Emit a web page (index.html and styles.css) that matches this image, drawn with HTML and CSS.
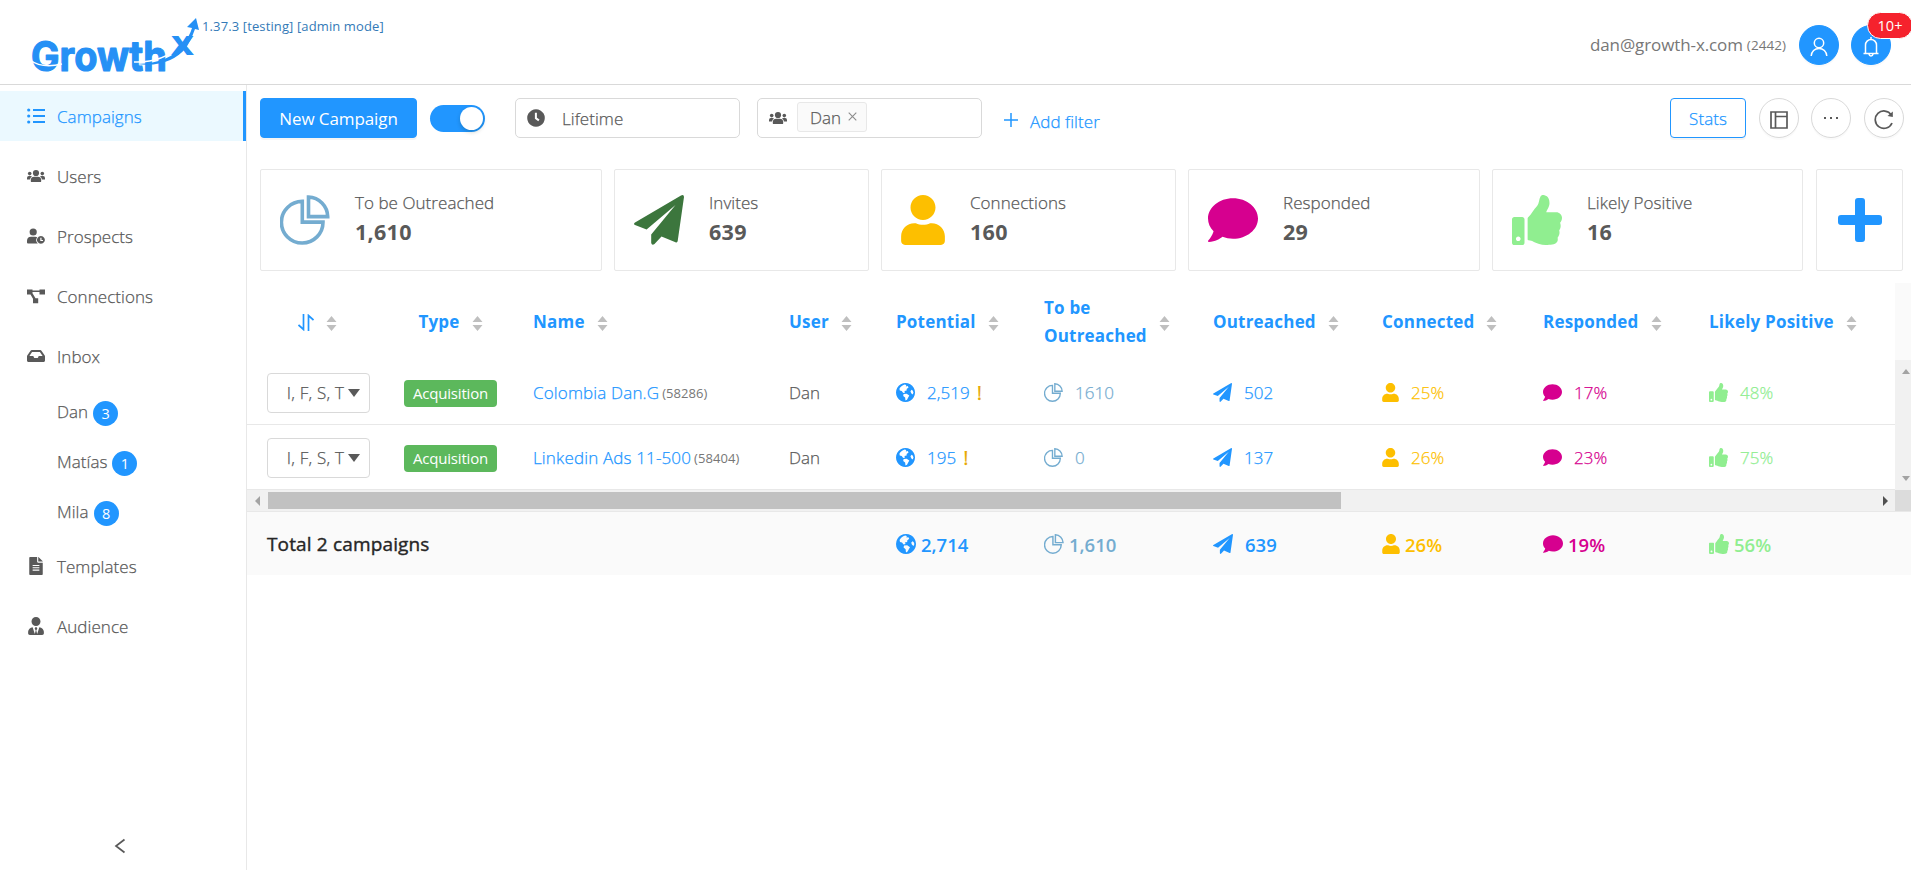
FILE: index.html
```html
<!DOCTYPE html>
<html lang="en">
<head>
  <meta charset="UTF-8">
  <title>GrowthX - Campaigns</title>
  <link rel="stylesheet" href="styles.css">
</head>
<body>

  <!-- icon sprite -->
  <svg class="sprite">
    <symbol id="i-list" viewBox="0 0 18 18">
      <circle cx="1.7" cy="3" r="1.6"/><circle cx="1.7" cy="9" r="1.6"/><circle cx="1.7" cy="15" r="1.6"/>
      <path d="M6 2h12v2H6zM6 8h12v2H6zM6 14h12v2H6z"/>
    </symbol>
    <symbol id="i-users" viewBox="0 0 18 18">
      <circle cx="9" cy="6" r="3.1"/><circle cx="2.7" cy="6.6" r="1.8"/><circle cx="15.3" cy="6.6" r="1.8"/>
      <path d="M3.8 14.2v-1.4a3.4 3.4 0 0 1 3.4-3.1h3.6a3.4 3.4 0 0 1 3.4 3.1v1.4q0 .9-.9.9H4.7q-.9 0-.9-.9zM0 12.4v-1.5A1.8 1.8 0 0 1 1.8 9.100h1.900q.8 0 1.300.5-1.700.9-2 2.800zM18 12.400v-1.500a1.800 1.800 0 0 0-1.800-1.800h-1.900q-.8 0-1.300.5 1.700.9 2 2.800z"/>
    </symbol>
    <symbol id="i-prospects" viewBox="0 0 18 18">
      <circle cx="6.200" cy="5" r="3.600"/>
      <path d="M0 15.500v-1.800a4.200 4.200 0 0 1 4-4h4.200q1.200 0 2 .5a4.800 4.800 0 0 0 .6 6.300H1q-1 0-1-1z"/>
      <path fill-rule="evenodd" d="M13.900 9a3.900 3.900 0 1 0 .01 0zM13.300 10.800h1.200v2.100h1.500v1.100h-2.700z"/>
    </symbol>
    <symbol id="i-connections" viewBox="0 0 18 18">
      <path d="M0 2.400h5.500v1.200h7V2.400H18v5h-5.500V5.100h-7v1.100l3 5h2.700v5H6v-4.400L3.500 7.400H0z"/>
    </symbol>
    <symbol id="i-inbox" viewBox="0 0 576 512">
      <path d="M567.938 243.908L462.25 85.374A48.003 48.003 0 0 0 422.311 64H153.689a48 48 0 0 0-39.938 21.374L8.062 243.908A47.994 47.994 0 0 0 0 270.533V400c0 26.51 21.49 48 48 48h480c26.51 0 48-21.49 48-48V270.533a47.994 47.994 0 0 0-8.062-26.625zM162.252 128h251.497l85.333 128H376l-32 64H232l-32-64H76.918l85.334-128z"/>
    </symbol>
    <symbol id="i-file" viewBox="0 0 384 512">
      <path fill-rule="evenodd" d="M224 136V0H24C10.700 0 0 10.700 0 24v464c0 13.300 10.700 24 24 24h336c13.300 0 24-10.700 24-24V160H248c-13.200 0-24-10.800-24-24zM96 224h192v32H96zM96 290h192v32H96zM96 356h192v32H96zM384 122v6H256V0h6l122 122z"/>
    </symbol>
    <symbol id="i-tie" viewBox="0 0 448 512">
      <path d="M224 256c70.700 0 128-57.300 128-128S294.700 0 224 0 96 57.300 96 128s57.300 128 128 128zM319 289l-61 191-26-95 30-60-18-37h-40l-18 37 30 60-26 95-61-191C60 292 0 350 0 422v42c0 26 21 48 48 48h352c27 0 48-22 48-48v-42c0-72-60-130-129-133z"/>
    </symbol>
    <symbol id="i-clock" viewBox="0 0 18 18">
      <path fill-rule="evenodd" d="M9 .2a8.800 8.800 0 1 0 .01 0zM7.900 3.800h2v4.900l2.600 1.900-1.200 1.600-3.400-2.500z"/>
    </symbol>
    <symbol id="i-globe" viewBox="0 0 50 50">
      <path fill-rule="evenodd" d="M25 0a25 25 0 1 0 .01 0zM23 4l4 1-1 4 5-1 2 4-5 4 0 4-6 1 2 4-5 1-4-5-5-1-1-5C12 10 16 6 23 4zM20 29l8-1 7 5-3 5-3 6-4 2-1-8-5-4zM41 18l3 2 2 5-2 5-4-3-2-5z"/>
    </symbol>
    <symbol id="i-plane" viewBox="0 0 50 50">
      <path d="M1 27.500L47 .400Q50-.700 50 2L43.700 46Q43.300 48 41.500 47.200L27.500 41.500 20.500 49Q18 51 17.200 48V39.500L41.500 10 12.600 34.500 1 30Q-1 29 1 27.500z"/>
    </symbol>
    <symbol id="i-pie" viewBox="0 0 50 50">
      <path class="line" d="M22.300 6.400a20.800 20.800 0 1 0 20.700 20.700H22.300zM28.500 2v19.600H47.700A20 20 0 0 0 28.500 2z"/>
    </symbol>
    <symbol id="i-user" viewBox="0 0 448 512">
      <path d="M224 256c70.700 0 128-57.300 128-128S294.700 0 224 0 96 57.300 96 128s57.300 128 128 128zm89.600 32h-16.700c-22.200 10.200-46.900 16-72.900 16s-50.600-5.800-72.900-16h-16.700C60.200 288 0 348.200 0 422.400V472c0 22 18 40 40 40h368c22 0 40-18 40-40v-49.600c0-74.200-60.200-134.400-134.400-134.400z"/>
    </symbol>
    <symbol id="i-comment" viewBox="0 0 512 512">
      <path d="M256 32C114.600 32 0 125.100 0 240c0 49.600 21.400 95 57 130.700C44.500 421.100 2.700 466 2.200 466.500c-2.200 2.300-2.800 5.700-1.500 8.700S4.800 480 8 480c66.300 0 116-31.800 140.600-51.400 32.700 12.300 69 19.400 107.400 19.400 141.400 0 256-93.100 256-208S397.400 32 256 32z"/>
    </symbol>
    <symbol id="i-thumb" viewBox="0 0 512 512">
      <path d="M104 224H24c-13.255 0-24 10.745-24 24v240c0 13.255 10.745 24 24 24h80c13.255 0 24-10.745 24-24V248c0-13.255-10.745-24-24-24zM64 472c-13.255 0-24-10.745-24-24s10.745-24 24-24 24 10.745 24 24-10.745 24-24 24zM384 81.452c0 42.416-25.970 66.208-33.277 94.548h101.723c33.397 0 59.397 27.746 59.553 58.098.084 17.938-7.546 37.249-19.439 49.197l-.11.11c9.836 23.337 8.237 56.037-9.308 79.469 8.681 25.895-.069 57.704-16.382 74.757 4.298 17.598 2.244 32.575-6.148 44.632C440.202 511.587 389.616 512 346.839 512l-2.845-.001c-48.287-.017-87.806-17.598-119.560-31.725-15.957-7.099-36.821-15.887-52.651-16.178-6.540-.12-11.783-5.457-11.783-11.998v-213.770c0-3.200 1.282-6.271 3.558-8.521 39.614-39.144 56.648-80.587 89.117-113.111 14.804-14.832 20.188-37.236 25.393-58.902C282.515 39.293 291.817 0 312 0c24 0 72 8 72 81.452z"/>
    </symbol>
    <symbol id="i-plus" viewBox="0 0 44 44">
      <path d="M20 0h4q3 0 3 3v14h14q3 0 3 3v4q0 3-3 3H27v14q0 3-3 3h-4q-3 0-3-3V27H3q-3 0-3-3v-4q0-3 3-3h14V3q0-3 3-3z"/>
    </symbol>
    <symbol id="i-sort" viewBox="0 0 10 15">
      <path d="M5 0l5 6H0zM5 15L0 9h10z"/>
    </symbol>
  </svg>

  <header class="header">
    <div class="brand">
      <svg class="logo" viewBox="0 0 180 69" width="180" height="69">
        <text class="logo-word" x="9" y="55.5" textLength="136" lengthAdjust="spacingAndGlyphs">Growth</text>
        <path class="logo-cut" d="M8 45Q20 54 40 49M112 47Q140 48 158 31"/>
        <text class="logo-x" x="149" y="40" textLength="23" lengthAdjust="spacingAndGlyphs">X</text>
        <path class="logo-arrow" d="M115 49Q148 48 161 30Q168 20 170 13L165 12 174 3 177 15 173 14Q170 24 164 33Q147 53 115 49z"/>
      </svg>
      <span class="version">1.37.3 [testing] [admin mode]</span>
    </div>
    <div class="account">
      <span class="email">dan@growth-x.com</span>
      <span class="email-id">(2442)</span>
      <button class="round blue">
        <svg class="stroke" width="18" height="20" viewBox="0 0 18 20"><circle cx="9" cy="6" r="4.700"/><path d="M1.200 19c.3-4.500 3.500-7.600 7.800-7.600s7.500 3.100 7.800 7.600"/></svg>
      </button>
      <button class="round blue bell">
        <svg class="stroke" width="16" height="20" viewBox="0 0 16 20"><path d="M8 0v2M2.500 16.500V8a5.500 5.500 0 0 1 11 0v8.500M.5 16.500h15M6 17.200q.3 1.800 2 1.800t2-1.800"/></svg>
        <span class="count">10+</span>
      </button>
    </div>
  </header>

  <div class="page">
    <nav class="sidebar">
      <a class="item active"><svg class="ico"><use href="#i-list"/></svg><span>Campaigns</span></a>
      <a class="item"><svg class="ico"><use href="#i-users"/></svg><span>Users</span></a>
      <a class="item"><svg class="ico"><use href="#i-prospects"/></svg><span>Prospects</span></a>
      <a class="item"><svg class="ico"><use href="#i-connections"/></svg><span>Connections</span></a>
      <a class="item"><svg class="ico"><use href="#i-inbox"/></svg><span>Inbox</span></a>
      <div class="sub">
        <a class="sub-item"><span>Dan</span><b>3</b></a>
        <a class="sub-item"><span>Matías</span><b>1</b></a>
        <a class="sub-item"><span>Mila</span><b>8</b></a>
      </div>
      <a class="item"><svg class="ico"><use href="#i-file"/></svg><span>Templates</span></a>
      <a class="item"><svg class="ico"><use href="#i-tie"/></svg><span>Audience</span></a>
      <svg class="collapse" width="12" height="16" viewBox="0 0 12 16"><path d="M10.500 1.500L2 8l8.500 6.500"/></svg>
    </nav>

    <main class="main">
      <div class="toolbar">
        <button class="btn primary"><span>New Campaign</span></button>
        <div class="switch"></div>
        <div class="select period"><svg class="ico small"><use href="#i-clock"/></svg><span>Lifetime</span></div>
        <div class="select people"><svg class="ico small"><use href="#i-users"/></svg>
          <div class="tag"><span>Dan</span><svg width="9" height="9" viewBox="0 0 9 9"><path d="M.7.700l7.600 7.600M8.300.700L.7 8.300"/></svg></div>
        </div>
        <a class="add-filter"><svg width="14" height="14" viewBox="0 0 14 14"><path d="M7 0v14M0 7h14"/></svg><span>Add filter</span></a>
        <div class="tools">
          <button class="btn stats"><span>Stats</span></button>
          <button class="round columns"><svg width="18" height="18" viewBox="0 0 18 18"><path d="M1 1h16v16H1zM5.500 1v16M5.500 5.500H17"/></svg></button>
          <button class="round dots"><i></i><i></i><i></i></button>
          <button class="round refresh"><svg width="20" height="20" viewBox="0 0 20 20"><path d="M17.300 5A8.700 8.700 0 1 0 18 13"/><path class="head" d="M18.800 1.500v5.400l-5.300-1z"/></svg></button>
        </div>
      </div>

      <div class="cards">
        <div class="card steel"><svg><use href="#i-pie"/></svg><div><p>To be Outreached</p><strong>1,610</strong></div></div>
        <div class="card forest"><svg><use href="#i-plane"/></svg><div><p>Invites</p><strong>639</strong></div></div>
        <div class="card amber"><svg class="narrow"><use href="#i-user"/></svg><div><p>Connections</p><strong>160</strong></div></div>
        <div class="card pink"><svg><use href="#i-comment"/></svg><div><p>Responded</p><strong>29</strong></div></div>
        <div class="card mint"><svg><use href="#i-thumb"/></svg><div><p>Likely Positive</p><strong>16</strong></div></div>
        <div class="card add"><svg><use href="#i-plus"/></svg></div>
      </div>

      <div class="table">
        <div class="row head">
          <div class="center"><svg class="swap" width="16" height="17" viewBox="0 0 16 17"><path d="M5.500 0v15.500L.5 11M10.500 17V1.500l5 4.500"/></svg><svg class="sort"><use href="#i-sort"/></svg></div>
          <div class="center"><span>Type</span><svg class="sort"><use href="#i-sort"/></svg></div>
          <div><span>Name</span><svg class="sort"><use href="#i-sort"/></svg></div>
          <div><span>User</span><svg class="sort"><use href="#i-sort"/></svg></div>
          <div><span>Potential</span><svg class="sort"><use href="#i-sort"/></svg></div>
          <div><span>To be<br>Outreached</span><svg class="sort"><use href="#i-sort"/></svg></div>
          <div><span>Outreached</span><svg class="sort"><use href="#i-sort"/></svg></div>
          <div><span>Connected</span><svg class="sort"><use href="#i-sort"/></svg></div>
          <div><span>Responded</span><svg class="sort"><use href="#i-sort"/></svg></div>
          <div><span>Likely Positive</span><svg class="sort"><use href="#i-sort"/></svg></div>
          <div class="gutter"></div>
        </div>

        <div class="body">
          <div class="rows">
            <div class="row">
              <div class="center"><button class="picker"><span>I, F, S, T</span><i></i></button></div>
              <div class="center"><span class="label">Acquisition</span></div>
              <div class="name"><a>Colombia Dan.G</a><small>(58286)</small></div>
              <div>Dan</div>
              <div class="blue-text"><svg><use href="#i-globe"/></svg><span>2,519</span><em>!</em></div>
              <div class="steel"><svg><use href="#i-pie"/></svg><span>1610</span></div>
              <div class="blue-text"><svg><use href="#i-plane"/></svg><span>502</span></div>
              <div class="amber"><svg class="narrow"><use href="#i-user"/></svg><span>25%</span></div>
              <div class="pink"><svg><use href="#i-comment"/></svg><span>17%</span></div>
              <div class="mint"><svg><use href="#i-thumb"/></svg><span>48%</span></div>
            </div>
            <div class="row">
              <div class="center"><button class="picker"><span>I, F, S, T</span><i></i></button></div>
              <div class="center"><span class="label">Acquisition</span></div>
              <div class="name"><a>Linkedin Ads 11-500</a><small>(58404)</small></div>
              <div>Dan</div>
              <div class="blue-text"><svg><use href="#i-globe"/></svg><span>195</span><em>!</em></div>
              <div class="steel"><svg><use href="#i-pie"/></svg><span>0</span></div>
              <div class="blue-text"><svg><use href="#i-plane"/></svg><span>137</span></div>
              <div class="amber"><svg class="narrow"><use href="#i-user"/></svg><span>26%</span></div>
              <div class="pink"><svg><use href="#i-comment"/></svg><span>23%</span></div>
              <div class="mint"><svg><use href="#i-thumb"/></svg><span>75%</span></div>
            </div>
          </div>
          <div class="vscroll"><i class="up"></i><i class="down"></i></div>
        </div>

        <div class="hscroll"><i class="left"></i><div class="thumb"></div><i class="right"></i><div class="corner"></div></div>

        <div class="row total">
          <div class="total-label">Total 2 campaigns</div>
          <div class="blue-text"><svg><use href="#i-globe"/></svg><span>2,714</span></div>
          <div class="steel"><svg><use href="#i-pie"/></svg><span>1,610</span></div>
          <div class="blue-text far"><svg><use href="#i-plane"/></svg><span>639</span></div>
          <div class="amber"><svg class="narrow"><use href="#i-user"/></svg><span>26%</span></div>
          <div class="pink"><svg><use href="#i-comment"/></svg><span>19%</span></div>
          <div class="mint"><svg><use href="#i-thumb"/></svg><span>56%</span></div>
        </div>
      </div>
    </main>
  </div>

</body>
</html>
```
FILE: styles.css
```css
* {
  box-sizing: border-box;
}

body {
  margin: 0;
  height: 870px;
  overflow: hidden;
  display: flex;
  flex-direction: column;
  background: #fff;
  color: #595959;
  font-family: "Open Sans", "Noto Sans", sans-serif;
  font-size: 17px;
  font-weight: 300;
  letter-spacing: 0.05px;
  -webkit-text-stroke: 0.25px;
}

.sprite {
  display: none;
}

svg {
  flex: none;
  fill: currentColor;
}

button {
  font: inherit;
  letter-spacing: inherit;
  color: inherit;
  padding: 0;
  cursor: pointer;
}

.line {
  fill: none;
  stroke: currentColor;
  stroke-width: 3.6;
}

/* Header */
.header {
  height: 85px;
  flex: none;
  display: flex;
  justify-content: space-between;
  border-bottom: 1px solid #d9d9d9;
  -webkit-text-stroke: 0;
}

.brand {
  display: flex;
  padding: 15px 0 0 22px;
}

.logo,
.logo-arrow {
  fill: #2590f5;
}

.logo-word {
  font-family: Inter, "Open Sans", sans-serif;
  font-weight: 700;
  font-size: 41px;
  stroke: #2590f5;
  stroke-width: 1.2;
  stroke-linejoin: round;
}

.logo-x {
  font-weight: 800;
  font-size: 27px;
}

.logo-cut {
  fill: none;
  stroke: #fff;
  stroke-width: 1.5;
}

.version {
  margin-top: 2px;
  font-size: 13px;
  font-weight: 400;
  letter-spacing: 0.12px;
  color: #337ab7;
}

.account {
  display: flex;
  align-items: center;
  padding: 5px 20px 0 0;
}

.email {
  color: #777;
  font-weight: 400;
  letter-spacing: -0.1px;
  margin-right: 4px;
}

.email-id {
  color: #777;
  font-weight: 400;
  font-size: 13.5px;
  margin-right: 13px;
}

.round {
  width: 40px;
  height: 40px;
  border: 1px solid #d9d9d9;
  border-radius: 50%;
  background: #fff;
  display: flex;
  align-items: center;
  justify-content: center;
  box-shadow: 0 2px 0 rgba(0, 0, 0, 0.02);
}

.round path {
  fill: none;
  stroke: #595959;
  stroke-width: 1.7;
}

.round.blue {
  background: #2196ff;
  border-color: #2196ff;
  padding-top: 4px;
}

.round .stroke * {
  fill: none;
  stroke: #fff;
  stroke-width: 1.5;
}

.bell {
  position: relative;
  margin-left: 12px;
}

.count {
  position: absolute;
  left: 15px;
  top: -14px;
  width: 46px;
  height: 27px;
  border: 1px solid #fff;
  border-radius: 14px;
  background: #f5222d;
  color: #fff;
  font-size: 14.5px;
  font-weight: 400;
  line-height: 25px;
}

/* Sidebar */
.page {
  flex: 1;
  display: flex;
  min-height: 0;
}

.sidebar {
  width: 247px;
  flex: none;
  display: flex;
  flex-direction: column;
  border-right: 1px solid #e8e8e8;
  padding: 6px 0 16px;
}

.item {
  height: 50px;
  margin-bottom: 10px;
  padding-left: 27px;
  display: flex;
  align-items: center;
}

.ico {
  width: 18px;
  height: 18px;
  margin-right: 12px;
}

.active {
  background: #ebf9ff;
  color: #2196ff;
  border-right: 3px solid #2196ff;
}

.sub {
  margin-top: -4px;
  margin-bottom: 4px;
}

.sub-item {
  height: 50px;
  padding-left: 57px;
  display: flex;
  align-items: center;
}

.sub-item span {
  margin-top: -1px;
}

.sub-item b {
  width: 25px;
  height: 25px;
  margin: 3px 0 0 5px;
  border-radius: 50%;
  background: #2196ff;
  color: #fff;
  font-size: 14.5px;
  font-weight: 400;
  line-height: 25px;
  text-align: center;
  -webkit-text-stroke: 0;
}

.collapse {
  margin: auto auto 0 114px;
}

.collapse path {
  fill: none;
  stroke: #595959;
  stroke-width: 1.7;
}

/* Toolbar */
.main {
  flex: 1;
  min-width: 0;
}

.toolbar {
  display: flex;
  align-items: center;
  padding: 13px 7px 0 13px;
}

.btn {
  height: 40px;
  border: 1px solid #2196ff;
  border-radius: 4px;
  box-shadow: 0 2px 0 rgba(0, 0, 0, 0.04);
}

.primary {
  width: 157px;
  background: #2196ff;
  color: #fff;
  font-weight: 400;
  letter-spacing: -0.1px;
  -webkit-text-stroke: 0;
}

.switch {
  width: 55px;
  height: 27px;
  margin: 0 30px 0 13px;
  padding: 2px;
  border-radius: 14px;
  background: #2196ff;
}

.switch::after {
  content: "";
  display: block;
  width: 23px;
  height: 23px;
  margin-left: auto;
  border-radius: 50%;
  background: #fff;
  box-shadow: 0 2px 4px rgba(0, 35, 11, 0.2);
}

.select {
  width: 225px;
  height: 40px;
  border: 1px solid #d9d9d9;
  border-radius: 5px;
  display: flex;
  align-items: center;
  padding-left: 11px;
}

.people {
  margin-left: 17px;
}

.period .small {
  margin-right: 17px;
}

.people .small {
  margin-right: 10px;
}

.tag {
  width: 70px;
  height: 30px;
  margin-top: -2px;
  padding-left: 12px;
  border: 1px solid #e8e8e8;
  border-radius: 3px;
  background: #fafafa;
  display: flex;
  align-items: center;
  gap: 7px;
}

.tag svg {
  margin-top: -2px;
  stroke: #8c8c8c;
  stroke-width: 1.1;
}

.add-filter {
  display: flex;
  align-items: center;
  gap: 12px;
  margin: 6px 0 0 22px;
  color: #2196ff;
}

.add-filter svg {
  margin-top: -2px;
  stroke: #2196ff;
  stroke-width: 1.5;
}

.tools {
  display: flex;
  gap: 12px;
  margin-left: auto;
}

.stats {
  width: 76px;
  margin-right: 1px;
  background: #fff;
  color: #2196ff;
}

.columns {
  padding-top: 3px;
}

.dots {
  gap: 4px;
}

.dots i {
  width: 2px;
  height: 2px;
  margin-top: -1px;
  background: #595959;
}

.round.refresh {
  margin-left: 1px;
  padding-top: 3px;
}

.round .head {
  fill: #595959;
  stroke: none;
}

/* Summary cards */
.cards {
  display: grid;
  grid-template-columns: 342px 255px 295px 292px 311px 88px;
  gap: 12px;
  padding: 31px 0 0 13px;
}

.card {
  height: 102px;
  border: 1px solid #e8e8e8;
  border-radius: 2px;
  display: flex;
  align-items: center;
  padding: 0 0 1px 19px;
}

.card svg {
  width: 50px;
  height: 50px;
  margin-right: 25px;
}

.card .narrow {
  width: 44px;
}

.card p,
.card strong {
  display: block;
  margin: 0;
  color: #595959;
  line-height: 29px;
}

.card div {
  margin-top: -5px;
}

.card strong {
  font-size: 21.5px;
  font-weight: 700;
  letter-spacing: 0.3px;
  line-height: 30px;
  -webkit-text-stroke: 0;
}

.card.add {
  margin-left: 1px;
  justify-content: center;
  padding: 0;
  color: #2196ff;
}

.add svg {
  width: 44px;
  height: 44px;
  margin: 0;
}

.steel { color: #74acd0; }
.forest { color: #3c763d; }
.amber { color: #fdbf00; }
.pink { color: #d6008f; }
.mint { color: #90ee90; }
.blue-text { color: #2196ff; }

/* Campaigns table */
.table {
  margin-top: 12px;
}

.row {
  height: 65px;
  display: grid;
  grid-template-columns: 141px 125px 256px 107px 148px 169px 169px 161px 166px 206px 16px;
  border-bottom: 1px solid #e8e8e8;
}

.row > div {
  display: flex;
  align-items: center;
  padding-left: 20px;
  padding-top: 1px;
  white-space: nowrap;
}

.row > .center {
  padding-left: 0;
  justify-content: center;
}

.row.head {
  height: 77px;
  border: 0;
  color: #2196ff;
  font-weight: 700;
  letter-spacing: 0.2px;
  line-height: 28px;
  -webkit-text-stroke: 0;
}

.head .sort {
  width: 11px;
  height: 15px;
  margin: 2px 0 0 12px;
  color: #bfbfbf;
}

.swap {
  fill: none;
  stroke: #2196ff;
  stroke-width: 1.7;
}

.row > .gutter {
  background: #fafafa;
}

.body {
  display: flex;
}

.rows {
  width: 1648px;
  flex: none;
  overflow: hidden;
}

.body .row svg {
  width: 19px;
  height: 19px;
  margin-right: 12px;
}

.body .row .narrow {
  width: 17px;
}

.picker {
  width: 103px;
  height: 40px;
  margin-left: 2px;
  border: 1px solid #d9d9d9;
  border-radius: 4px;
  background: #fff;
  display: flex;
  align-items: center;
  justify-content: flex-end;
  gap: 4px;
  padding-right: 9px;
}

.picker span {
  letter-spacing: 0.2px;
}

.picker i {
  border: 6px solid transparent;
  border-top: 8px solid #595959;
  border-bottom: 0;
}

.label {
  width: 93px;
  height: 27px;
  margin-top: 2px;
  border-radius: 4px;
  background: #5cb85c;
  color: #fff;
  font-size: 15px;
  font-weight: 400;
  letter-spacing: -0.2px;
  line-height: 27px;
  text-align: center;
  -webkit-text-stroke: 0;
}

.name {
  gap: 3px;
}

.name a {
  margin-top: -1px;
  color: #2196ff;
  letter-spacing: 0.15px;
}

.name small {
  font-size: 13px;
  font-weight: 400;
  color: #777;
  -webkit-text-stroke: 0;
}

em {
  margin-left: 7px;
  color: #e8a800;
  font-size: 20px;
  font-style: normal;
  font-weight: 400;
}

.vscroll {
  flex: 1;
  background: #f1f1f1;
  display: flex;
  flex-direction: column;
  justify-content: space-between;
  align-items: flex-end;
  padding: 9px 1px;
}

.up,
.down {
  border: 4.5px solid transparent;
}

.up {
  border-bottom: 5px solid #a3a3a3;
  border-top: 0;
}

.down {
  border-top: 5px solid #a3a3a3;
  border-bottom: 0;
}

.hscroll {
  height: 22px;
  display: flex;
  align-items: center;
  background: #f1f1f1;
  border-bottom: 1px solid #e8e8e8;
  padding-left: 8px;
}

.left,
.right {
  border: 5px solid transparent;
}

.left {
  border-left: 0;
  border-right: 5px solid #a3a3a3;
}

.right {
  margin: 0 7px 0 auto;
  border-right: 0;
  border-left: 5px solid #505050;
}

.thumb {
  width: 1073px;
  height: 17px;
  margin-left: 8px;
  background: #c1c1c1;
}

.corner {
  width: 16px;
  height: 100%;
  background: #dcdcdc;
}

.total {
  height: 63px;
  grid-template-columns: 629px 148px 169px 169px 161px 166px 222px;
  border: 0;
  background: #fafafa;
  font-size: 18.5px;
  font-weight: 600;
  letter-spacing: 0;
  -webkit-text-stroke: 0;
}

.total > .total-label {
  color: #262626;
  font-size: 19px;
  font-weight: 400;
  letter-spacing: 0.15px;
  -webkit-text-stroke: 0.4px;
}

.total svg {
  width: 20px;
  height: 20px;
  margin-right: 5px;
}

.total .narrow {
  width: 18px;
}

.total .far svg {
  margin-right: 12px;
}
```
